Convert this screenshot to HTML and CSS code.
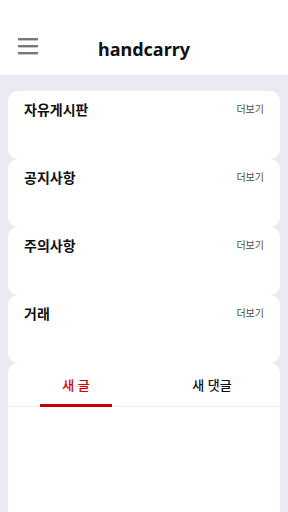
FILE: index.html
```html
<!DOCTYPE html>
<html lang="ko">
<head>
    <meta charset="UTF-8">
    <meta name="viewport" content="width=device-width, initial-scale=1.0">
    <title>handcarry</title>
    <link rel="stylesheet" href="styles.css">
</head>
<body>
    <header class="top-bar">
        <div class="menu-btn">
            <svg width="20" height="18" viewBox="0 0 20 18">
                <rect x="0" y="1" width="20" height="2.4" fill="#777"/>
                <rect x="0" y="8" width="20" height="2.4" fill="#777"/>
                <rect x="0" y="15" width="20" height="2.4" fill="#777"/>
            </svg>
        </div>
        <div class="app-title">handcarry</div>
        <div></div>
    </header>

    <main class="content">
        <section class="board-card">
            <div class="board-title">자유게시판</div>
            <div class="more-link">더보기</div>
        </section>
        <section class="board-card">
            <div class="board-title">공지사항</div>
            <div class="more-link">더보기</div>
        </section>
        <section class="board-card">
            <div class="board-title">주의사항</div>
            <div class="more-link">더보기</div>
        </section>
        <section class="board-card">
            <div class="board-title">거래</div>
            <div class="more-link">더보기</div>
        </section>

        <section class="tab-card">
            <div class="tabs">
                <div class="tab active">새 글</div>
                <div class="tab">새 댓글</div>
            </div>
            <div class="tab-body"></div>
        </section>
    </main>
</body>
</html>
```

FILE: styles.css
```css
* {
    margin: 0;
    padding: 0;
    box-sizing: border-box;
}

html, body {
    height: 100%;
}

body {
    background: #eaeaf2;
    font-family: "Noto Sans", "Noto Sans CJK KR", sans-serif;
    color: #111;
    display: flex;
    flex-direction: column;
    overflow: hidden;
}

.top-bar {
    height: 75px;
    padding-top: 20px;
    background: white;
    display: grid;
    grid-template-columns: 1fr auto 1fr;
    align-items: center;
    flex-shrink: 0;
}

.menu-btn {
    padding-left: 18px;
    margin-bottom: 3px;
    display: flex;
}

.app-title {
    font-size: 18px;
    font-weight: 700;
    padding-top: 2px;
    color: #111;
}

.content {
    flex: 1;
    padding: 16px 8px 0;
    display: flex;
    flex-direction: column;
}

.board-card {
    height: 68px;
    background: white;
    border-radius: 10px;
    padding: 7px 16px 0;
    display: flex;
    justify-content: space-between;
    align-items: flex-start;
}

.board-title {
    font-family: "Noto Sans CJK KR", sans-serif;
    font-size: 14px;
    font-weight: 700;
    line-height: 22px;
}

.more-link {
    font-family: "Noto Sans CJK KR", sans-serif;
    font-size: 10px;
    color: #4a4a4a;
    line-height: 22px;
}

.tab-card {
    flex: 1;
    background: white;
    border-radius: 10px 10px 0 0;
    display: flex;
    flex-direction: column;
}

.tabs {
    height: 44px;
    display: flex;
    border-bottom: 1px solid #ececec;
}

.tab {
    flex: 1;
    display: flex;
    align-items: center;
    justify-content: center;
    font-family: "Noto Sans CJK KR", sans-serif;
    font-size: 13px;
    font-weight: 500;
    color: #111;
    position: relative;
}

.tab.active {
    color: #d40000;
}

.tab.active::after {
    content: "";
    position: absolute;
    left: 32px;
    right: 32px;
    bottom: -1px;
    height: 3px;
    background: #c80000;
}

.tab-body {
    flex: 1;
}
```
